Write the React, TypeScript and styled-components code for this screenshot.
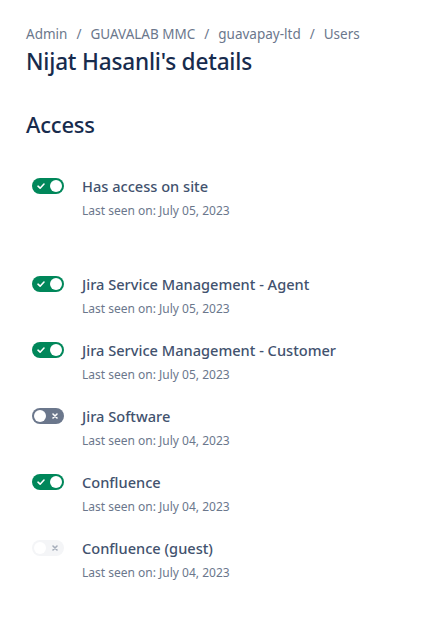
import styled, { createGlobalStyle } from 'styled-components';

const GlobalStyle = createGlobalStyle`
  html, body {
    margin: 0;
    padding: 0;
    background: #fff;
  }
  body {
    font-family: "Noto Sans", "Open Sans", sans-serif;
    color: #172b4d;
  }
`;

const Page = styled.div`
  padding: 24px 26px;
`;

const Breadcrumbs = styled.nav`
  display: flex;
  align-items: center;
  font-size: 13.5px;
  line-height: 20px;
  color: #6b778c;
`;

const Crumb = styled.span`
  white-space: nowrap;
`;

const Separator = styled.span`
  padding: 0 9px;
`;

const Title = styled.h1`
  margin: 4px 0 0;
  font-size: 22.6px;
  font-weight: 500;
  line-height: 28px;
  color: #172b4d;
  letter-spacing: -0.2px;
`;

const SectionTitle = styled.h2`
  margin: 34px 0 0;
  font-size: 22px;
  font-weight: 500;
  line-height: 28px;
  color: #172b4d;
  letter-spacing: -0.2px;
`;

const List = styled.ul`
  list-style: none;
  margin: 38px 0 0;
  padding: 0 0 0 6px;
  display: flex;
  flex-direction: column;
  gap: 23px;
`;

const Row = styled.li<{ $spaced?: boolean }>`
  display: flex;
  align-items: flex-start;
  gap: 18px;
  margin-bottom: ${p => (p.$spaced ? '32px' : '0')};
`;

const Track = styled.span<{ $on: boolean; $disabled?: boolean }>`
  position: relative;
  flex: none;
  width: 32px;
  height: 16px;
  margin-top: 2px;
  border-radius: 8px;
  background: ${p => (p.$disabled ? '#f4f5f7' : p.$on ? '#00875a' : '#6b778c')};
  display: flex;
  align-items: center;
  padding: 0 4px;
  box-sizing: border-box;
`;

const Knob = styled.span<{ $on: boolean }>`
  position: absolute;
  top: 2px;
  left: ${p => (p.$on ? '18px' : '2px')};
  width: 12px;
  height: 12px;
  border-radius: 50%;
  background: #fff;
`;

const Info = styled.div`
  display: flex;
  flex-direction: column;
`;

const Name = styled.span`
  font-size: 14.6px;
  font-weight: 500;
  line-height: 20px;
  color: #42526e;
`;

const Seen = styled.span`
  margin-top: 7px;
  font-size: 12px;
  line-height: 16px;
  color: #6b778c;
`;

const Check = () => (
  <svg width="10" height="10" viewBox="0 0 10 10">
    <path d="M2 5.2 L4.1 7.2 L8 3" fill="none" stroke="#fff" strokeWidth="1.6" strokeLinecap="round" strokeLinejoin="round" />
  </svg>
);

const Cross = ({ color }: { color: string }) => (
  <svg width="10" height="10" viewBox="0 0 10 10" style={{ marginLeft: 'auto' }}>
    <path d="M3 3 L7 7 M7 3 L3 7" fill="none" stroke={color} strokeWidth="1.6" strokeLinecap="round" />
  </svg>
);

interface IToggleProps {
  on: boolean;
  disabled?: boolean;
}

const Toggle = ({ on, disabled }: IToggleProps) => (
  <Track $on={on} $disabled={disabled}>
    {on ? <Check /> : <Cross color={disabled ? '#a5adba' : '#fff'} />}
    <Knob $on={on} />
  </Track>
);

interface IProduct {
  name: string;
  seen: string;
  on: boolean;
  disabled?: boolean;
}

const products: IProduct[] = [
  { name: 'Has access on site', seen: 'July 05, 2023', on: true },
  { name: 'Jira Service Management - Agent', seen: 'July 05, 2023', on: true },
  { name: 'Jira Service Management - Customer', seen: 'July 05, 2023', on: true },
  { name: 'Jira Software', seen: 'July 04, 2023', on: false },
  { name: 'Confluence', seen: 'July 04, 2023', on: true },
  { name: 'Confluence (guest)', seen: 'July 04, 2023', on: false, disabled: true },
];

const crumbs = ['Admin', 'GUAVALAB MMC', 'guavapay-ltd', 'Users'];

export default function App() {
  return (
    <Page>
      <GlobalStyle />
      <Breadcrumbs>
        {crumbs.map((c, i) => (
          <Crumb key={c}>
            {c}
            {i < crumbs.length - 1 && <Separator>/</Separator>}
          </Crumb>
        ))}
      </Breadcrumbs>
      <Title>Nijat Hasanli's details</Title>
      <SectionTitle>Access</SectionTitle>
      <List>
        {products.map((p, i) => (
          <Row key={p.name} $spaced={i === 0}>
            <Toggle on={p.on} disabled={p.disabled} />
            <Info>
              <Name>{p.name}</Name>
              <Seen>Last seen on: {p.seen}</Seen>
            </Info>
          </Row>
        ))}
      </List>
    </Page>
  );
}
